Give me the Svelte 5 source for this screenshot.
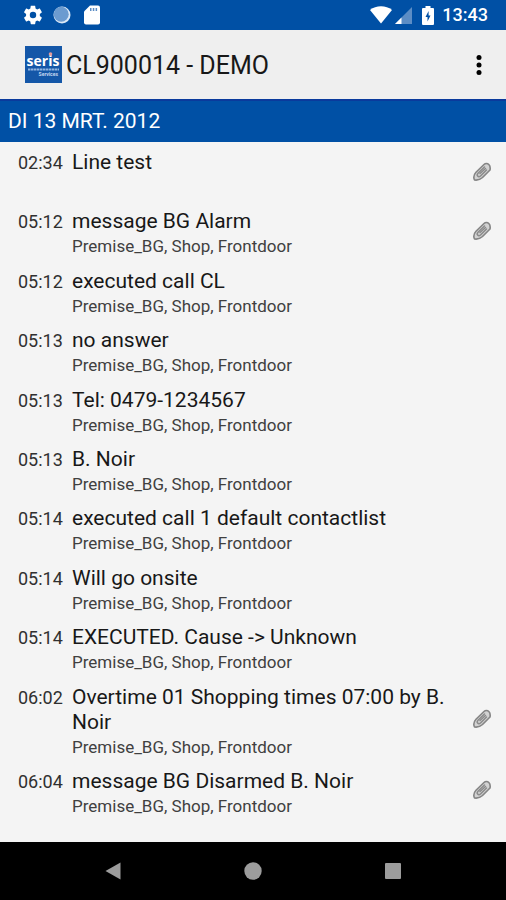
<script lang="ts">
  interface LogEntry {
    time: string;
    title: string;
    location?: string;
    attachment?: boolean;
  }

  const location = 'Premise_BG, Shop, Frontdoor';

  const entries: LogEntry[] = [
    { time: '02:34', title: 'Line test', attachment: true },
    { time: '05:12', title: 'message BG Alarm', location, attachment: true },
    { time: '05:12', title: 'executed call CL', location },
    { time: '05:13', title: 'no answer', location },
    { time: '05:13', title: 'Tel: 0479-1234567', location },
    { time: '05:13', title: 'B. Noir', location },
    { time: '05:14', title: 'executed call 1 default contactlist', location },
    { time: '05:14', title: 'Will go onsite', location },
    { time: '05:14', title: 'EXECUTED. Cause -> Unknown', location },
    { time: '06:02', title: 'Overtime 01 Shopping times 07:00 by B. Noir', location, attachment: true },
    { time: '06:04', title: 'message BG Disarmed B. Noir', location, attachment: true },
  ];
</script>

<div class="screen">
  <div class="status-bar">
    <div class="status-left">
      <svg width="22" height="22" viewBox="0 0 24 24" aria-hidden="true">
        <path
          fill="#fff"
          d="M19.4 13c0-.3.1-.6.1-1s0-.7-.1-1l2.1-1.7c.2-.1.2-.4.1-.6l-2-3.5c-.1-.2-.4-.3-.6-.2l-2.5 1c-.5-.4-1.1-.7-1.7-1l-.4-2.6c0-.3-.2-.4-.4-.4h-4c-.3 0-.5.1-.5.4l-.4 2.6c-.6.3-1.2.6-1.7 1l-2.5-1c-.2-.1-.5 0-.6.2l-2 3.5c-.1.2-.1.5.1.6L4.500 11c0 .3-.1.7-.1 1s0 .7.1 1l-2.1 1.7c-.2.1-.2.4-.1.6l2 3.5c.1.2.4.3.6.2l2.5-1c.5.4 1.1.7 1.7 1l.4 2.6c0 .3.2.4.5.4h4c.2 0 .4-.1.4-.4l.4-2.6c.6-.3 1.2-.6 1.7-1l2.5 1c.2.1.5 0 .6-.2l2-3.5c.1-.2.1-.5-.1-.6zM12 15.500a3.500 3.500 0 1 1 0-7 3.500 3.500 0 0 1 0 7z"
        />
      </svg>
      <svg width="18" height="18" viewBox="0 0 18 18" aria-hidden="true">
        <circle cx="9" cy="9" r="8.5" fill="#dce9f7" />
        <circle cx="8.2" cy="8.2" r="7.5" fill="#6b9bd0" />
      </svg>
      <svg class="sd-card" width="16" height="20" viewBox="0 0 16 20" aria-hidden="true">
        <path fill="#fff" d="M6 .5h8a2 2 0 0 1 2 2v15a2 2 0 0 1-2 2H2a2 2 0 0 1-2-2V6.500z" />
        <path fill="#5c8dc5" d="M6 3h1.500v3H6zM8.800 3h1.500v3H8.800zM11.600 3h1.500v3h-1.500z" />
      </svg>
    </div>
    <div class="status-right">
      <svg width="22" height="18" viewBox="0 0 22 18" aria-hidden="true">
        <path fill="#fff" d="M11 17.500L0 4C6-1 16-1 22 4z" />
      </svg>
      <svg width="17" height="17" viewBox="0 0 17 17" aria-hidden="true">
        <path fill="#5c8dc5" d="M17 0v17H0z" />
        <path fill="#fff" d="M6.500 10.500V17H0z" />
      </svg>
      <svg class="battery" width="12" height="19" viewBox="0 0 12 19" aria-hidden="true">
        <path fill="#fff" d="M3.500 0h5v2H11a1 1 0 0 1 1 1v15a1 1 0 0 1-1 1H1a1 1 0 0 1-1-1V3a1 1 0 0 1 1-1h2.500z" />
        <path fill="#0050a5" d="M6.600 5L3.500 11h2v4.500L8.500 9.500H6.600z" />
      </svg>
      <span class="clock">13:43</span>
    </div>
  </div>

  <header class="app-bar">
    <svg class="logo" width="37" height="37" viewBox="0 0 37 37" role="img" aria-label="seris">
      <rect width="37" height="37" fill="#1457a8" />
      <text x="18" y="20" class="logo-name" text-anchor="middle">seris</text>
      <circle cx="25.500" cy="8" r="1.800" fill="#e59a9a" />
      <path d="M3 23.500h31" stroke="#8fb4df" stroke-width="2" stroke-dasharray="2.500 .5" />
      <text x="33" y="30" class="logo-sub" text-anchor="end">Services</text>
    </svg>
    <h1>CL900014 - DEMO</h1>
    <button class="menu" type="button" aria-label="More options">
      <svg width="8" height="22" viewBox="0 0 8 22" aria-hidden="true">
        <circle cx="4" cy="3.500" r="2.500" />
        <circle cx="4" cy="11" r="2.500" />
        <circle cx="4" cy="18.500" r="2.500" />
      </svg>
    </button>
  </header>

  <h2 class="date">DI 13 MRT. 2012</h2>

  <ul class="log">
    {#each entries as entry}
      <li class="entry">
        <time>{entry.time}</time>
        <div class="details">
          <p class="title">{entry.title}</p>
          <p class="location">{entry.location ?? ''}</p>
        </div>
        {#if entry.attachment}
          <svg class="clip" width="20" height="20" viewBox="0 0 20 20" role="img" aria-label="Attachment">
            <g fill="none" stroke-linecap="round" stroke-linejoin="round">
              <path
                d="M18 8l-7.500 7.500c-2.200 2-5 3-8 2.500C1.300 15.500 2 12.500 4 10.300l8-7.800c1.500-1.500 3.500-1.300 4.800 0S18.500 5.500 18 8z"
                fill="#d2d2d2"
                stroke="#858585"
                stroke-width="1.600"
              />
              <path d="M14.500 8l-6 6c-1 .8-2.200.8-2.900 0s-.5-1.800.4-2.800l6.500-6.200" stroke="#8a8a8a" stroke-width="1.500" />
              <path d="M8 11.500l5.500-5" stroke="#8a8a8a" stroke-width="1.500" />
            </g>
          </svg>
        {/if}
      </li>
    {/each}
  </ul>

  <nav class="nav-bar" aria-label="System navigation">
    <button type="button" aria-label="Back">
      <svg width="18" height="18" viewBox="0 0 18 18"><path d="M16.500 .5v17L1.500 9z" /></svg>
    </button>
    <button type="button" aria-label="Home">
      <svg width="18" height="18" viewBox="0 0 18 18"><circle cx="9" cy="9" r="8.7" /></svg>
    </button>
    <button type="button" aria-label="Recent apps">
      <svg width="18" height="18" viewBox="0 0 18 18"><rect x="1" y="1" width="16" height="16" rx="1" /></svg>
    </button>
  </nav>
</div>

<style>
  :global(body) {
    margin: 0;
  }

  .screen {
    display: flex;
    flex-direction: column;
    min-height: 100vh;
    background: #f4f4f4;
    color: #181818;
    font-family: Roboto, 'Liberation Sans', sans-serif;
  }

  svg {
    display: block;
    flex-shrink: 0;
  }

  h1,
  h2,
  p {
    margin: 0;
    font-weight: 400;
  }

  button {
    display: flex;
    align-items: center;
    justify-content: center;
    padding: 0;
    border: none;
    background: none;
    cursor: pointer;
  }

  .status-bar {
    display: flex;
    align-items: center;
    justify-content: space-between;
    height: 30px;
    padding: 0 18px 0 22px;
    background: #0050a5;
    color: #fff;
  }

  .status-left {
    display: flex;
    align-items: center;
    gap: 9px;
  }

  .sd-card {
    margin-left: 4px;
  }

  .status-right {
    display: flex;
    align-items: center;
    gap: 3px;
  }

  .battery {
    margin: 0 5px 0 7px;
  }

  .clock {
    font-size: 18px;
    font-weight: 500;
    line-height: 30px;
  }

  .app-bar {
    display: flex;
    align-items: center;
    height: 69px;
    padding: 0 12px 0 25px;
    background: #efefef;
  }

  .logo-name {
    fill: #fff;
    font-family: 'Open Sans', sans-serif;
    font-size: 14px;
    font-weight: 700;
  }

  .logo-sub {
    fill: #c5d8ef;
    font-size: 5px;
    font-weight: 700;
  }

  h1 {
    flex: 1;
    margin-left: 4px;
    padding-top: 2px;
    font-size: 25px;
    line-height: 32px;
  }

  .menu {
    width: 30px;
    height: 48px;
  }

  .date {
    padding: 0 8px;
    border-top: 2px solid #0a3a9c;
    background: #0050a5;
    color: #fff;
    font-size: 21px;
    line-height: 41px;
  }

  .log {
    display: flex;
    flex: 1;
    flex-direction: column;
    justify-content: space-between;
    margin: 0;
    padding: 8px 14px 26px 18px;
    list-style: none;
  }

  .entry {
    display: flex;
    align-items: center;
  }

  time {
    align-self: flex-start;
    width: 54px;
    flex-shrink: 0;
    color: #303030;
    font-size: 18px;
    line-height: 25px;
  }

  .details {
    flex: 1;
    padding-right: 20px;
  }

  .title {
    font-size: 21px;
    line-height: 25px;
  }

  .location {
    min-height: 19px;
    margin-top: 3px;
    color: #404040;
    font-size: 17px;
    line-height: 19px;
  }

  .clip {
    margin-bottom: 4px;
  }

  .nav-bar {
    display: flex;
    justify-content: center;
    height: 58px;
    background: #000;
  }

  .nav-bar button {
    width: 140px;
  }

  .nav-bar svg {
    fill: #9c9c9c;
  }
</style>
